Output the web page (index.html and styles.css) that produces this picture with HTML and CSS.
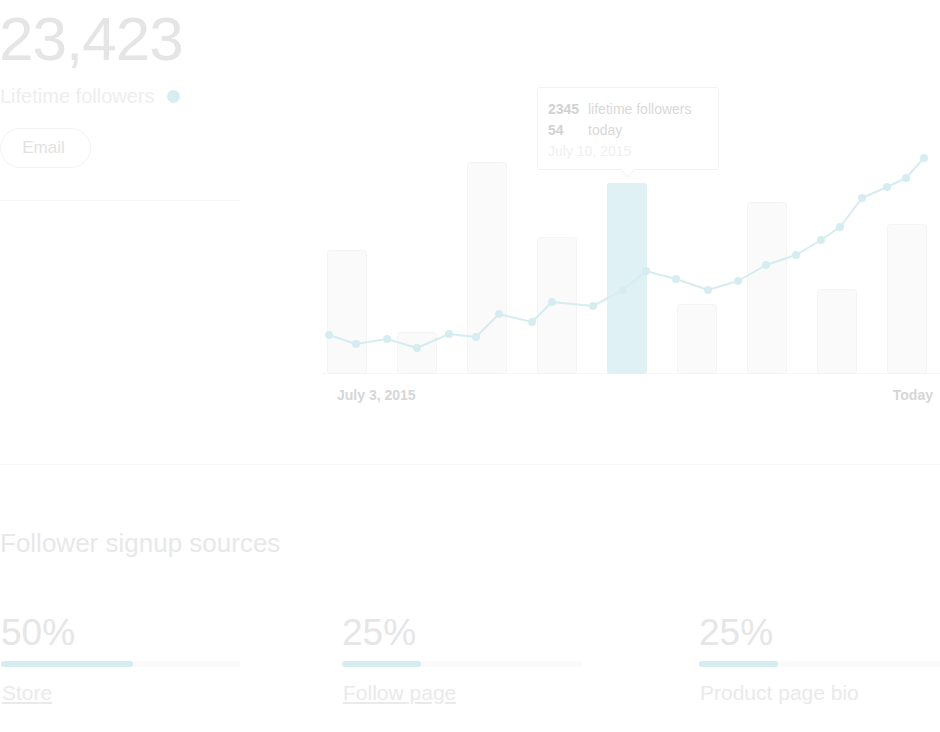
FILE: index.html
```html
<!DOCTYPE html>
<html>
<head>
<meta charset="utf-8">
<link rel="stylesheet" href="styles.css">
</head>
<body>
<div class="page">
  <section class="overview">
    <div class="summary">
      <div class="total">23,423</div>
      <div class="legend">Lifetime followers <span class="dot"></span></div>
      <button class="email">Email</button>
      <div class="rule"></div>
    </div>
    <div class="chart">
      <svg class="plot" width="618" height="374" viewBox="0 0 618 374">
        <line x1="0" y1="373.5" x2="618" y2="373.5" stroke="#f6f6f6" stroke-width="1"/>
        <g fill="#fafafa" stroke="#f4f4f4" stroke-width="1">
          <rect x="5.5" y="250.5" width="39" height="123" rx="3"/>
          <rect x="75.5" y="332.5" width="39" height="41" rx="3"/>
          <rect x="145.5" y="162.5" width="39" height="211" rx="3"/>
          <rect x="215.5" y="237.5" width="39" height="136" rx="3"/>
          <rect x="355.5" y="304.5" width="39" height="69" rx="3"/>
          <rect x="425.5" y="202.5" width="39" height="171" rx="3"/>
          <rect x="495.5" y="289.5" width="39" height="84" rx="3"/>
          <rect x="565.5" y="224.5" width="39" height="149" rx="3"/>
        </g>
        <rect x="285" y="183" width="40" height="191" rx="3" fill="#dff1f4"/>
        <polyline fill="none" stroke="#d5edf0" stroke-width="2" stroke-linejoin="round"
          points="7,335 34,344 65,339 95,348 127,334 154,337 177,314 210,322 230,302 271,306 301,290 324,271 354,279 386,290 416,281 444,265 474,255 499,240 518,227 540,198 565,187 584,178 602,158"/>
        <g fill="#d5edf0">
          <circle cx="7" cy="335" r="4"/><circle cx="34" cy="344" r="4"/><circle cx="65" cy="339" r="4"/>
          <circle cx="95" cy="348" r="4"/><circle cx="127" cy="334" r="4"/><circle cx="154" cy="337" r="4"/>
          <circle cx="177" cy="314" r="4"/><circle cx="210" cy="322" r="4"/><circle cx="230" cy="302" r="4"/>
          <circle cx="271" cy="306" r="4"/><circle cx="301" cy="290" r="4"/><circle cx="324" cy="271" r="4"/>
          <circle cx="354" cy="279" r="4"/><circle cx="386" cy="290" r="4"/><circle cx="416" cy="281" r="4"/>
          <circle cx="444" cy="265" r="4"/><circle cx="474" cy="255" r="4"/><circle cx="499" cy="240" r="4"/>
          <circle cx="518" cy="227" r="4"/><circle cx="540" cy="198" r="4"/><circle cx="565" cy="187" r="4"/>
          <circle cx="584" cy="178" r="4"/><circle cx="602" cy="158" r="4"/>
        </g>
      </svg>
      <div class="axis">
        <span>July 3, 2015</span>
        <span>Today</span>
      </div>
      <div class="tooltip">
        <div class="tip-row"><b>2345</b><span>lifetime followers</span></div>
        <div class="tip-row"><b>54</b><span>today</span></div>
        <div class="tip-date">July 10, 2015</div>
      </div>
    </div>
  </section>

  <section class="sources">
    <h2 class="sources-title">Follower signup sources</h2>
    <div class="source-grid">
      <div class="source">
        <div class="pct">50%</div>
        <div class="track"><div class="fill" style="width:132px"></div></div>
        <a class="source-name link">Store</a>
      </div>
      <div class="source">
        <div class="pct">25%</div>
        <div class="track"><div class="fill" style="width:79px"></div></div>
        <a class="source-name link">Follow page</a>
      </div>
      <div class="source">
        <div class="pct">25%</div>
        <div class="track wide"><div class="fill" style="width:79px"></div></div>
        <span class="source-name">Product page bio</span>
      </div>
    </div>
  </section>
</div>
</body>
</html>
```

FILE: styles.css
```css
* { box-sizing: border-box; }
html, body { margin: 0; padding: 0; background: #fff; }
body {
  font-family: "Liberation Sans", Arial, Helvetica, sans-serif;
  width: 940px;
  height: 732px;
  overflow: hidden;
}
.page { width: 940px; }

.overview {
  display: flex;
  gap: 82px;
  height: 465px;
  border-bottom: 1px solid #f7f7f7;
}
.summary { width: 240px; flex: none; }
.total {
  font-size: 62px;
  line-height: 62px;
  letter-spacing: -1px;
  color: #e5e5e5;
  margin-top: 8px;
  margin-left: -1px;
}
.legend {
  margin-top: 15px;
  font-size: 20px;
  line-height: 22px;
  color: #eeeeee;
  display: flex;
  align-items: center;
}
.dot {
  display: inline-block;
  width: 13px;
  height: 13px;
  border-radius: 50%;
  background: #d6eef1;
  margin-left: 12px;
  margin-top: 1px;
}
.email {
  display: block;
  margin-top: 21px;
  width: 91px;
  height: 40px;
  border: 1px solid #f3f3f3;
  border-radius: 20px;
  background: #fff;
  font-family: inherit;
  font-size: 17px;
  color: #e2e2e2;
  padding: 0 4px 0 0;
  text-align: center;
}
.rule {
  margin-top: 32px;
  height: 1px;
  background: #f6f6f6;
  width: 240px;
}

.chart {
  position: relative;
  width: 618px;
  flex: none;
}
.plot { display: block; }
.axis {
  display: flex;
  justify-content: space-between;
  padding: 13px 7px 0 15px;
  font-size: 14px;
  font-weight: bold;
  color: #d6d6d6;
  line-height: 16px;
}
.tooltip {
  position: absolute;
  left: 215px;
  top: 87px;
  width: 182px;
  height: 83px;
  border: 1px solid #f2f2f2;
  border-radius: 3px;
  background: #fff;
  padding: 11px 10px 0 10px;
  font-size: 14px;
  line-height: 21px;
}
.tooltip::after {
  content: "";
  position: absolute;
  left: 84px;
  bottom: -6px;
  width: 10px;
  height: 10px;
  background: #fff;
  border-right: 1px solid #f2f2f2;
  border-bottom: 1px solid #f2f2f2;
  transform: rotate(45deg);
}
.tip-row { display: flex; }
.tip-row b { width: 40px; color: #d2d2d2; }
.tip-row span { color: #d9d9d9; }
.tip-date { color: #f0f0f0; }

.sources { padding-top: 63px; }
.sources-title {
  margin: 0;
  font-weight: normal;
  font-size: 26px;
  line-height: 30px;
  color: #e8e8e8;
}
.source-grid {
  display: grid;
  grid-template-columns: 341px 357px 1fr;
  margin-top: 54px;
}
.pct {
  font-size: 37px;
  line-height: 42px;
  color: #e6e6e6;
  margin-left: 1px;
}
.track {
  margin-top: 7px;
  width: 240px;
  height: 6px;
  border-radius: 3px;
  background: #fafafa;
  margin-left: 1px;
}
.track.wide { width: 242px; }
.fill {
  height: 6px;
  border-radius: 3px;
  background: #d5edf0;
}
.source-name {
  display: inline-block;
  margin-top: 14px;
  margin-left: 2px;
  font-size: 21px;
  line-height: 24px;
  color: #eaeaea;
}
.link { text-decoration: underline; }
```
